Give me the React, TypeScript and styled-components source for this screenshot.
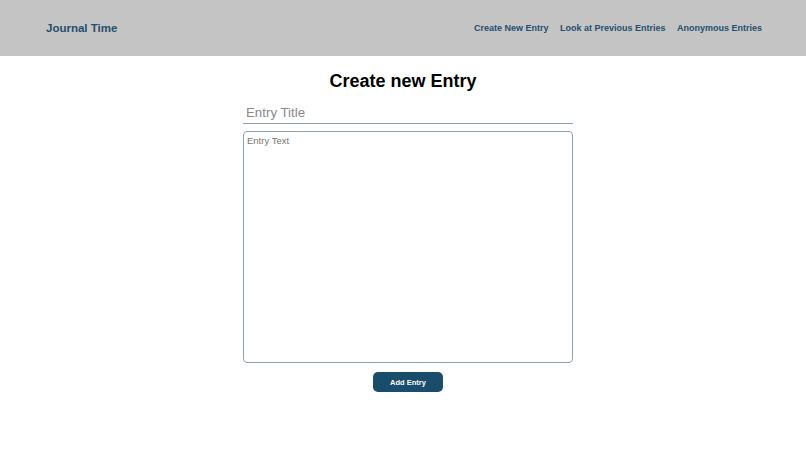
import styled, { createGlobalStyle } from 'styled-components'

const GlobalStyle = createGlobalStyle`
  html, body {
    margin: 0;
    padding: 0;
    background: #ffffff;
    font-family: "Liberation Sans", Arial, sans-serif;
  }
`

const navLinks = [
  { id: 'create', label: 'Create New Entry' },
  { id: 'previous', label: 'Look at Previous Entries' },
  { id: 'anonymous', label: 'Anonymous Entries' },
]

const Header = styled.header`
  height: 56px;
  background: #c4c4c4;
  display: flex;
  align-items: center;
  justify-content: space-between;
  padding: 0 44px 0 46px;
`
const Logo = styled.a`
  color: #1f4f6f;
  font-size: 11.5px;
  font-weight: 700;
  text-decoration: none;
  margin-top: -1px;
`
const Nav = styled.nav`
  display: flex;
  gap: 11.5px;
  margin-top: -1px;
`
const NavLink = styled.a`
  color: #1f4f6f;
  font-size: 9px;
  font-weight: 700;
  text-decoration: none;
`
const Main = styled.main`
  display: flex;
  flex-direction: column;
  align-items: center;
  padding-top: 15px;
`
const Title = styled.h1`
  margin: 0;
  font-size: 18px;
  line-height: 21px;
  font-weight: 700;
  color: #000;
`
const Form = styled.form`
  width: 330px;
  display: flex;
  flex-direction: column;
  align-items: center;
  margin: 8px 0 0 10px;
`
const TitleInput = styled.input`
  box-sizing: border-box;
  width: 100%;
  height: 24px;
  border: none;
  border-bottom: 1px solid #8ea3b2;
  padding: 2px 3px 0;
  font-family: inherit;
  font-size: 13.3px;
  outline: none;
  &::placeholder {
    color: #8a8a8a;
  }
`
const TextArea = styled.textarea`
  box-sizing: border-box;
  width: 100%;
  height: 232px;
  margin-top: 7px;
  border: 1px solid #8ea3b2;
  border-radius: 4px;
  padding: 3px 3px;
  font-family: inherit;
  font-size: 9.5px;
  resize: none;
  outline: none;
  &::placeholder {
    color: #777;
  }
`
const Button = styled.button`
  margin-top: 9px;
  width: 70px;
  height: 20px;
  border: none;
  border-radius: 5px;
  background: #1a4c6c;
  color: #fff;
  font-family: inherit;
  font-size: 7.5px;
  font-weight: 700;
  cursor: pointer;
`

const App = () => {
  return (
    <>
      <GlobalStyle />
      <Header>
        <Logo href="#">Journal Time</Logo>
        <Nav>
          {navLinks.map((link) => (
            <NavLink key={link.id} href="#">
              {link.label}
            </NavLink>
          ))}
        </Nav>
      </Header>
      <Main>
        <Title>Create new Entry</Title>
        <Form onSubmit={(e) => e.preventDefault()}>
          <TitleInput placeholder="Entry Title" />
          <TextArea placeholder="Entry Text" />
          <Button type="submit">Add Entry</Button>
        </Form>
      </Main>
    </>
  )
}
export default App
